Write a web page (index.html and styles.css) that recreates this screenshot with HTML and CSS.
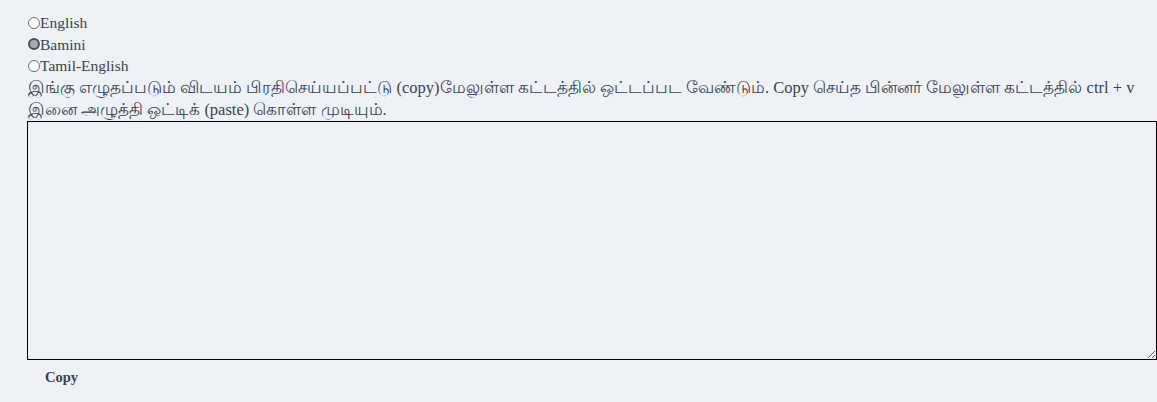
FILE: index.html
```html
<!DOCTYPE html>
<html lang="en">
<head>
<meta charset="utf-8">
<link rel="stylesheet" href="styles.css">
</head>
<body>
<div class="wrap">
  <label class="opt"><input type="radio" name="kb" class="radio">English</label>
  <label class="opt"><input type="radio" name="kb" class="radio" checked>Bamini</label>
  <label class="opt"><input type="radio" name="kb" class="radio">Tamil-English</label>
  <p class="note">இங்கு எழுதப்படும் விடயம் பிரதிசெய்யப்பட்டு <span class="lat">(copy)</span>மேலுள்ள கட்டத்தில் ஒட்டப்பட வேண்டும். <span class="lat">Copy</span> செய்த பின்னர் மேலுள்ள கட்டத்தில் <span class="lat">ctrl + v</span> இனை அழுத்தி ஒட்டிக் <span class="lat">(paste)</span> கொள்ள முடியும்.</p>
  <textarea class="box"></textarea>
  <button class="copy" type="button">Copy</button>
</div>
</body>
</html>
```
FILE: styles.css
```css
html, body {
  margin: 0;
  background: #eef1f6;
}
body {
  font-family: "Liberation Serif", "DejaVu Serif", serif;
  font-size: 15.5px;
  color: #3b4252;
}
.wrap {
  padding: 12px 0 0 28px;
  display: flex;
  flex-direction: column;
  align-items: flex-start;
}
.opt {
  display: flex;
  align-items: center;
  line-height: 21.5px;
}
.radio {
  appearance: none;
  -webkit-appearance: none;
  box-sizing: border-box;
  margin: 0;
  width: 12px;
  height: 12px;
  border: 1px solid #6b6f78;
  border-radius: 50%;
  background: #ffffff;
}
.radio:checked {
  border: 2.5px solid #4b505a;
  background: #a4a9b3;
}
.note {
  margin: 0;
  font-size: 16.5px;
  line-height: 22px;
  width: 1115px;
}
.lat {
  font-family: "Liberation Serif", serif;
}
.box {
  box-sizing: border-box;
  width: 1130px;
  height: 239px;
  margin: 0 0 0 -1px;
  border: 1px solid #000;
  background: #eef1f6;
  padding: 2px;
}
.copy {
  margin: 5px 0 0 9px;
  padding: 4px 8px;
  border: none;
  background: transparent;
  font-family: "Liberation Serif", serif;
  font-weight: bold;
  font-size: 14.5px;
  color: #3b4252;
}
```
